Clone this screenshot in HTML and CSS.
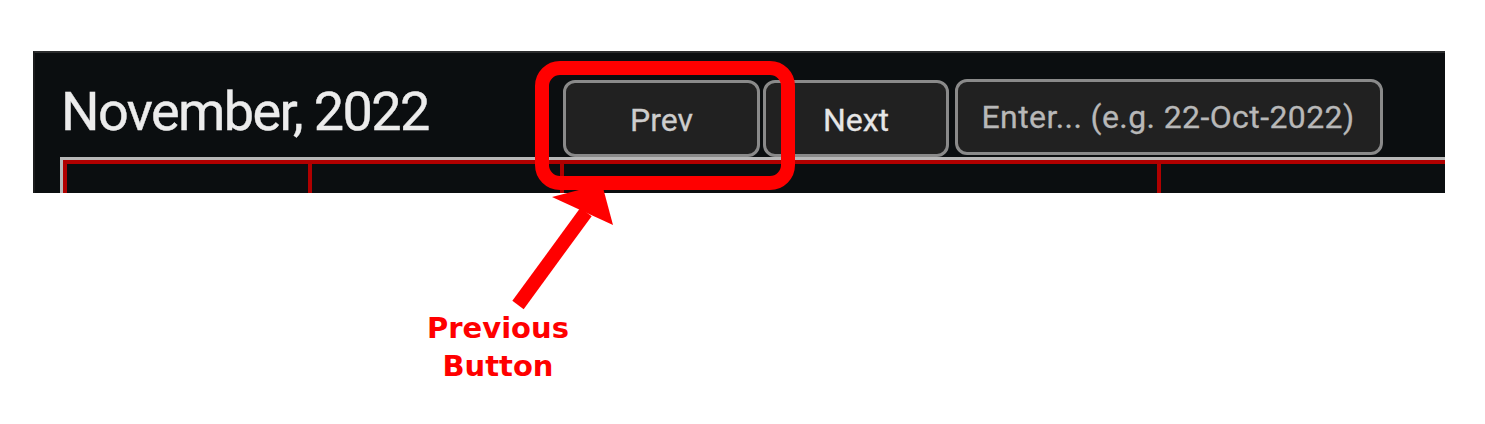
FILE: index.html
```html
<!DOCTYPE html>
<html lang="en">
<head>
<meta charset="utf-8">
<title>Previous Button</title>
<link rel="stylesheet" href="styles.css">
</head>
<body>
<div class="page">
  <div class="panel">
    <div class="header">
      <div class="title">November, 2022</div>
      <div class="controls">
        <button class="btn btn-prev">Prev</button>
        <button class="btn btn-next">Next</button>
        <div class="btn btn-input">Enter... (e.g. 22-Oct-2022)</div>
      </div>
    </div>
    <div class="grid">
      <div class="cell c1"></div>
      <div class="cell c2"></div>
      <div class="cell c3"></div>
      <div class="cell c4"></div>
    </div>
  </div>
  <svg class="overlay" width="1485" height="424" viewBox="0 0 1485 424">
    <rect x="542" y="68" width="246" height="115" rx="18" ry="18" fill="none" stroke="#ff0000" stroke-width="14"/>
    <line x1="518" y1="305" x2="586" y2="212" stroke="#ff0000" stroke-width="14"/>
    <polygon points="552,197 602,184 613,225" fill="#ff0000"/>
  </svg>
  <div class="note">Previous<br>Button</div>
</div>
</body>
</html>
```

FILE: styles.css
```css
* { box-sizing: border-box; }
html, body { margin: 0; padding: 0; background: #ffffff; }
.page {
  position: relative;
  width: 1485px;
  height: 424px;
  overflow: hidden;
  padding: 51px 0 0 33px;
}
.panel {
  width: 1412px;
  height: 142px;
  background: #0b0e10;
  border-top: 2px solid #2b2c2d;
  border-left: 2px solid #1b1c1d;
  overflow: hidden;
  display: flex;
  flex-direction: column;
}
.header {
  display: flex;
  align-items: flex-start;
  height: 104px;
  padding: 27px 0 0 26px;
  flex: none;
}
.title {
  width: 502px;
  flex: none;
  margin-top: 5px;
  font-family: Roboto, "Liberation Sans", sans-serif;
  font-weight: 400;
  font-size: 54px;
  line-height: 53px;
  letter-spacing: -1.6px;
  color: #ececec;
  -webkit-text-stroke: 0.4px #ececec;
}
.controls {
  display: flex;
  align-items: flex-start;
}
.btn {
  display: flex;
  align-items: center;
  justify-content: center;
  height: 77px;
  border: 3px solid #8a8a8a;
  border-radius: 12px;
  background: #212121;
  font-family: Roboto, "Liberation Sans", sans-serif;
  font-weight: 400;
  font-size: 32px;
  padding: 0;
  margin: 0;
}
.btn-prev { width: 197px; color: #cdcdcd; padding-top: 2px; -webkit-text-stroke: 0.3px #cdcdcd; }
.btn-next { width: 186px; margin-left: 3px; color: #e6e6e6; padding-top: 2px; -webkit-text-stroke: 0.3px #e6e6e6; }
.btn-input {
  width: 428px;
  height: 76px;
  margin-left: 6px;
  margin-top: -1px;
  color: #b8b8b8;
  font-size: 32px;
  letter-spacing: 0.4px;
  padding-right: 2px;
  -webkit-text-stroke: 0.3px #b8b8b8;
}
.grid {
  margin-left: 25px;
  flex: 1;
  display: grid;
  grid-template-columns: 245px 252px 597px 1fr;
  border-top: 3px solid #b8b8b8;
  border-left: 3px solid #b8b8b8;
}
.cell {
  border-top: 4px solid #b00000;
  border-left: 4px solid #b00000;
}
.overlay {
  position: absolute;
  top: 0;
  left: 0;
  pointer-events: none;
}
.note {
  position: absolute;
  left: 418px;
  top: 309px;
  width: 160px;
  text-align: center;
  font-family: "DejaVu Sans", Verdana, sans-serif;
  font-weight: bold;
  font-size: 29px;
  line-height: 38px;
  color: #ff0000;
}
```
